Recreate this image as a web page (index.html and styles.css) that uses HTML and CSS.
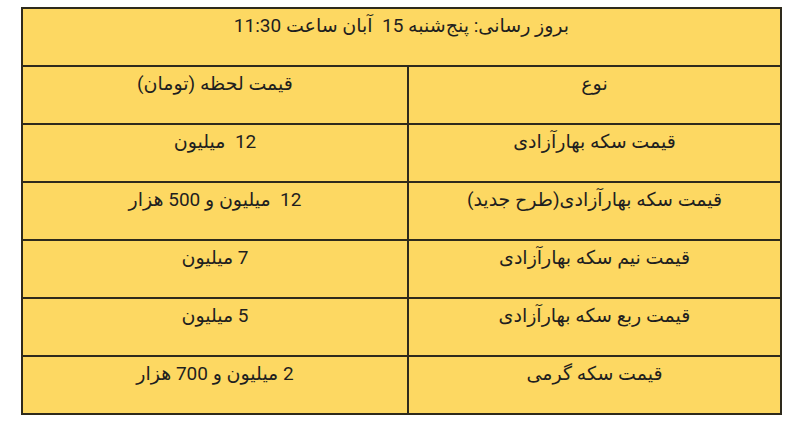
FILE: index.html
```html
<!DOCTYPE html>
<html lang="fa" dir="rtl">
<head>
<meta charset="utf-8">
<link rel="stylesheet" href="styles.css">
</head>
<body>
<div class="wrap">
<table class="prices">
  <colgroup><col class="c-type"><col class="c-price"></colgroup>
  <tr><td colspan="2">بروز رسانی: پنج‌شنبه 15&nbsp; آبان ساعت 11:30</td></tr>
  <tr><td>نوع</td><td>قیمت لحظه (تومان)</td></tr>
  <tr><td>قیمت سکه بهارآزادی</td><td>12&nbsp; میلیون</td></tr>
  <tr><td>قیمت سکه بهارآزادی(طرح جدید)</td><td>12&nbsp; میلیون و 500 هزار</td></tr>
  <tr><td>قیمت نیم سکه بهارآزادی</td><td>7 میلیون</td></tr>
  <tr><td>قیمت ربع سکه بهارآزادی</td><td>5 میلیون</td></tr>
  <tr><td>قیمت سکه گرمی</td><td>2 میلیون و 700 هزار</td></tr>
</table>
</div>
</body>
</html>
```
FILE: styles.css
```css
html, body { margin: 0; padding: 0; background: #ffffff; }
.wrap { padding: 7px 18px 0 0; }
.prices {
  width: 759px;
  border-collapse: collapse;
  background: #fdd862;
  font-family: Roboto, "DejaVu Sans", sans-serif;
  font-size: 19px;
  color: #1f1f1f;
  table-layout: fixed;
}
.c-type { width: 373px; }
.c-price { width: 386px; }
.prices td {
  border: 2px solid #2e2a1c;
  height: 58px;
  box-sizing: border-box;
  padding: 3px 8px 0;
  line-height: 28px;
  vertical-align: top;
  text-align: center;
}
```
